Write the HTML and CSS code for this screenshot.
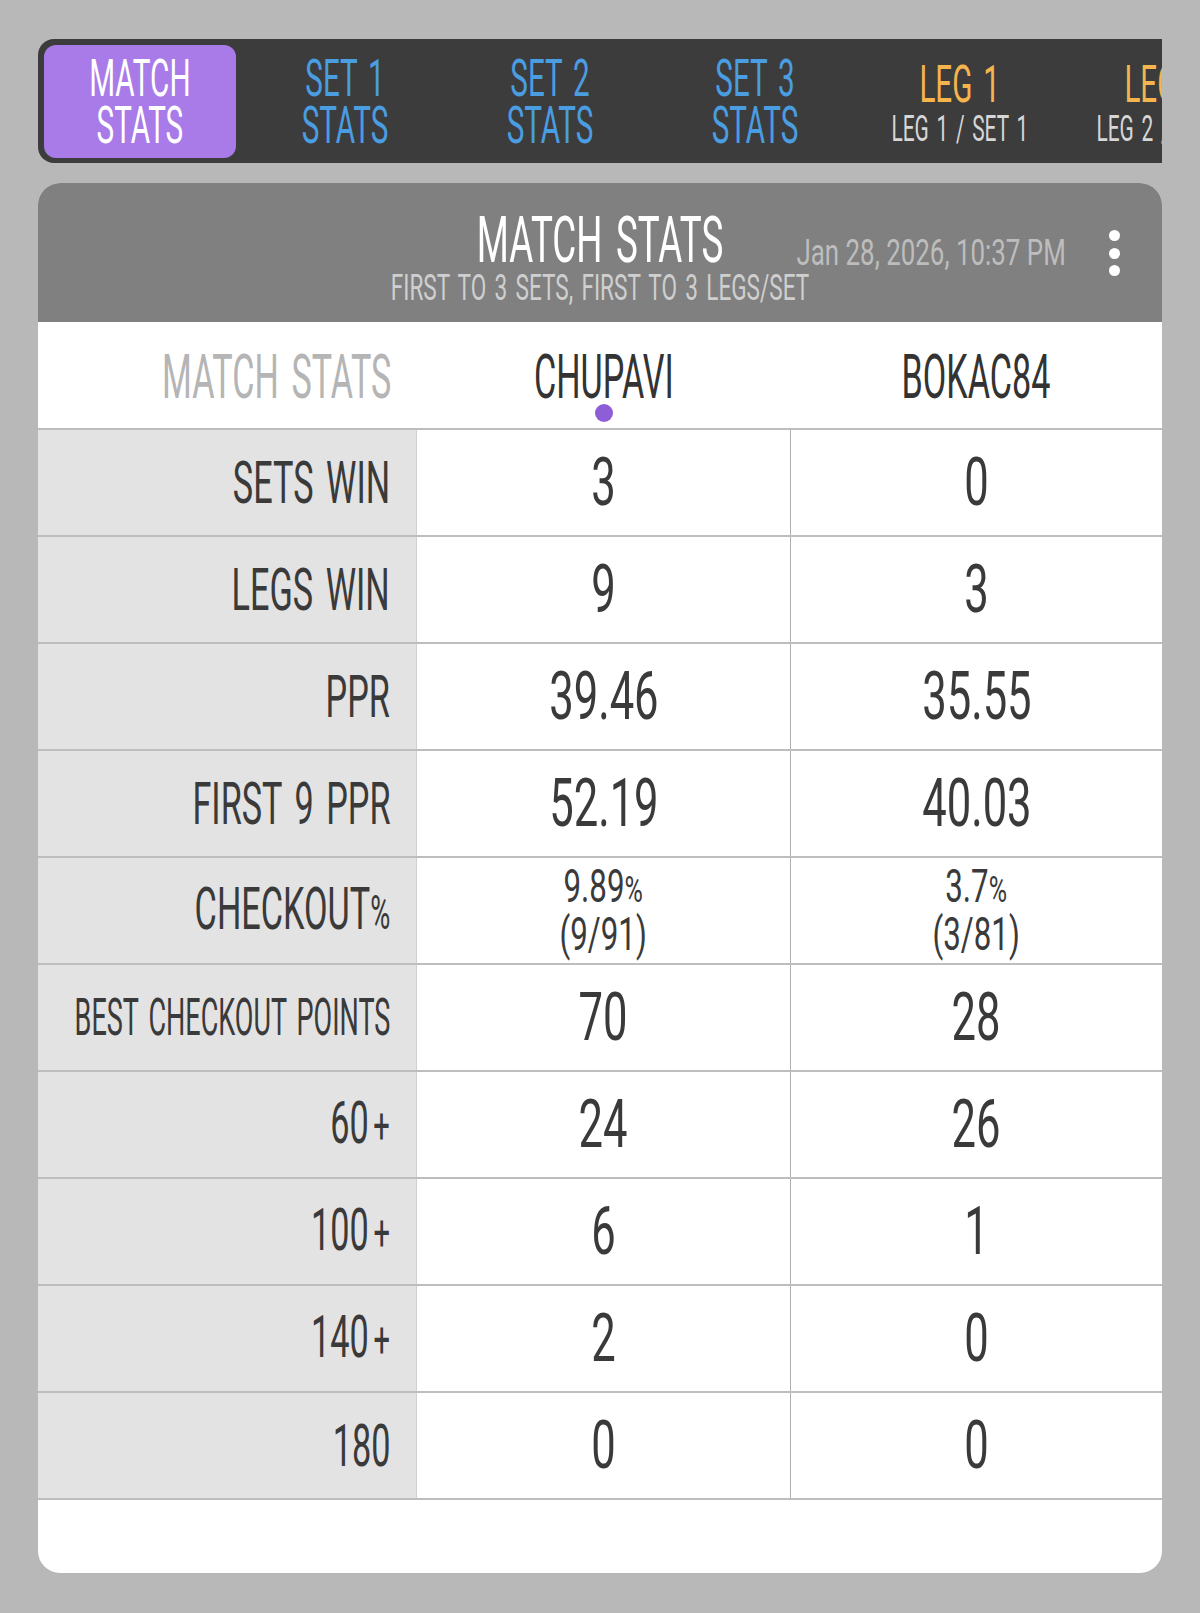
FILE: index.html
```html
<!DOCTYPE html>
<html lang="en">
    <head>
        <meta charset="UTF-8" />
        <meta name="viewport" content="width=device-width, initial-scale=1.0" />
        <title>Match Stats</title>
        <link rel="stylesheet" href="styles.css">
    </head>
    <body>
        <nav class="tabs">
            <div class="tab tab-active"><span class="t">MATCH<br>STATS</span></div>
            <div class="tab"><span class="t">SET 1<br>STATS</span></div>
            <div class="tab"><span class="t">SET 2<br>STATS</span></div>
            <div class="tab"><span class="t">SET 3<br>STATS</span></div>
            <div class="tab tab-leg">
                <span class="t leg-title">LEG 1</span>
                <span class="t leg-sub">LEG 1 / SET 1</span>
            </div>
            <div class="tab tab-leg">
                <span class="t leg-title">LEG 2</span>
                <span class="t leg-sub">LEG 2 / SET 1</span>
            </div>
        </nav>

        <div class="card">
            <div class="card-head">
                <div></div>
                <div class="title-block">
                    <span class="t title">MATCH STATS</span>
                    <span class="t subtitle">FIRST TO 3 SETS, FIRST TO 3 LEGS/SET</span>
                </div>
                <div class="head-right">
                    <span class="t date">Jan 28, 2026, 10:37 PM</span>
                    <div class="kebab"><span></span><span></span><span></span></div>
                </div>
            </div>

            <div class="stats">
                <div class="row row-head">
                    <div class="cell label"><span class="t">MATCH STATS</span></div>
                    <div class="cell name"><span class="t">CHUPAVI</span><span class="dot"></span></div>
                    <div class="cell name"><span class="t">BOKAC84</span></div>
                </div>

                <div class="row">
                    <div class="cell label"><span class="t">SETS WIN</span></div>
                    <div class="cell val"><span class="t num">3</span></div>
                    <div class="cell val"><span class="t num">0</span></div>
                </div>
                <div class="row">
                    <div class="cell label"><span class="t">LEGS WIN</span></div>
                    <div class="cell val"><span class="t num">9</span></div>
                    <div class="cell val"><span class="t num">3</span></div>
                </div>
                <div class="row">
                    <div class="cell label"><span class="t">PPR</span></div>
                    <div class="cell val"><span class="t num">39.46</span></div>
                    <div class="cell val"><span class="t num">35.55</span></div>
                </div>
                <div class="row">
                    <div class="cell label"><span class="t">FIRST 9 PPR</span></div>
                    <div class="cell val"><span class="t num">52.19</span></div>
                    <div class="cell val"><span class="t num">40.03</span></div>
                </div>
                <div class="row">
                    <div class="cell label"><span class="t">CHECKOUT<small>%</small></span></div>
                    <div class="cell val"><span class="t num two">9.89<small>%</small><br>(9/91)</span></div>
                    <div class="cell val"><span class="t num two">3.7<small>%</small><br>(3/81)</span></div>
                </div>
                <div class="row">
                    <div class="cell label"><span class="t label-long">BEST CHECKOUT POINTS</span></div>
                    <div class="cell val"><span class="t num">70</span></div>
                    <div class="cell val"><span class="t num">28</span></div>
                </div>
                <div class="row">
                    <div class="cell label"><span class="t">60<small class="plus">+</small></span></div>
                    <div class="cell val"><span class="t num">24</span></div>
                    <div class="cell val"><span class="t num">26</span></div>
                </div>
                <div class="row">
                    <div class="cell label"><span class="t">100<small class="plus">+</small></span></div>
                    <div class="cell val"><span class="t num">6</span></div>
                    <div class="cell val"><span class="t num">1</span></div>
                </div>
                <div class="row">
                    <div class="cell label"><span class="t">140<small class="plus">+</small></span></div>
                    <div class="cell val"><span class="t num">2</span></div>
                    <div class="cell val"><span class="t num">0</span></div>
                </div>
                <div class="row">
                    <div class="cell label"><span class="t">180</span></div>
                    <div class="cell val"><span class="t num">0</span></div>
                    <div class="cell val"><span class="t num">0</span></div>
                </div>
            </div>
        </div>
    </body>
</html>
```

FILE: styles.css
```css
body {
    margin: 0;
    padding: 39px 38px 40px;
    background-color: #b8b8b8;
    font-family: Roboto, "Liberation Sans", sans-serif;
    color: #3a3a3a;
}

/* the app font is very condensed, so squeeze the text */
.t {
    display: inline-block;
    white-space: nowrap;
    word-spacing: 0.12em;
    transform: scaleX(0.57);
}

.t small {
    font-size: 0.8em;
}

.t .plus {
    padding-left: 8px;
    font-size: 0.85em;
}

/* tab strip */
.tabs {
    display: flex;
    gap: 13px;
    height: 124px;
    box-sizing: border-box;
    padding: 6px 6px 5px;
    background-color: #3c3c3c;
    border-radius: 16px 0 0 16px;
    overflow: hidden;
}

.tab {
    flex: 0 0 192px;
    min-width: 0;
    display: flex;
    flex-direction: column;
    align-items: center;
    justify-content: center;
    border-radius: 12px;
    font-size: 52px;
    line-height: 47px;
    text-align: center;
    color: #4a9de0;
}

.tab-active {
    background-color: #a87be8;
    color: #fff;
}

.tab-leg {
    padding-top: 8px;
}

.leg-title {
    color: #f6b44d;
}

.leg-sub {
    font-size: 36px;
    line-height: 42px;
    color: #d6d6d6;
    transform: scaleX(0.58);
}

/* card */
.card {
    margin-top: 20px;
    height: 1390px;
    background-color: #fff;
    border-radius: 22px;
    overflow: hidden;
}

.card-head {
    display: grid;
    grid-template-columns: minmax(0, 1fr) auto minmax(0, 1fr);
    height: 139px;
    box-sizing: border-box;
    padding-top: 27px;
    background-color: #808080;
}

.title-block {
    display: flex;
    flex-direction: column;
    align-items: center;
}

.title {
    font-size: 65px;
    line-height: 60px;
    color: #fff;
    transform: scaleX(0.565);
}

.subtitle {
    font-size: 37px;
    line-height: 35px;
    color: #cfcfcf;
    transform: scaleX(0.61);
}

.head-right {
    display: flex;
    justify-content: flex-end;
    align-items: flex-start;
    gap: 43px;
    padding-right: 42px;
}

.date {
    margin-top: 25px;
    font-size: 37px;
    line-height: 35px;
    color: #bdbdbd;
    word-spacing: 0;
    transform: scaleX(0.7);
    transform-origin: right center;
}

.kebab {
    display: flex;
    flex-direction: column;
    gap: 6.5px;
    margin-top: 20px;
}

.kebab span {
    width: 11px;
    height: 11px;
    border-radius: 50%;
    background-color: #fff;
}

/* stats table */
.row {
    display: grid;
    grid-template-columns: 379px 373px 1fr;
    height: 107px;
    box-sizing: border-box;
    border-bottom: 2px solid #bdbdbd;
}

.cell {
    display: flex;
    align-items: center;
    justify-content: center;
}

.label {
    justify-content: flex-end;
    padding-right: 26px;
    background-color: #e3e3e3;
    border-right: 1px solid #d0d0d0;
    font-size: 59px;
    line-height: 60px;
}

.label .t {
    transform: scaleX(0.58);
    transform-origin: right center;
}

.label .label-long {
    font-size: 52px;
    transform: scaleX(0.52);
}

.val {
    font-size: 66px;
    line-height: 60px;
}

.val + .val {
    border-left: 1px solid #b0b0b0;
}

.num {
    transform: scaleX(0.66);
    text-align: center;
}

.num.two {
    font-size: 46px;
    line-height: 45px;
    transform: scaleX(0.68);
}

.row-head {
    height: 108px;
}

.row-head .cell {
    align-items: flex-start;
    padding-top: 25px;
    background-color: #fff;
    border: none;
    font-size: 61px;
    line-height: 60px;
}

.row-head .label {
    color: #b5b5b5;
}

.row-head .label .t {
    transform: scaleX(0.56);
}

.name {
    flex-direction: column;
    align-items: center;
    justify-content: flex-start;
    color: #333;
}

.row-head .name {
    align-items: center;
}

.name .t {
    transform: scaleX(0.56);
}

.dot {
    width: 18px;
    height: 18px;
    margin-top: -3px;
    border-radius: 50%;
    background-color: #8e5ed8;
}
```
